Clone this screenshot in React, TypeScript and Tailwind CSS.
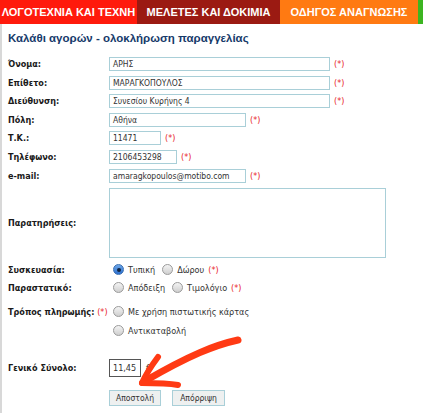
import React from 'react';

const font = { fontFamily: '"DejaVu Sans Condensed", "DejaVu Sans", Verdana, sans-serif' };

function Req() {
  return <span className="text-[#e8242a] text-[9px] ml-[4px]">(*)</span>;
}

function TextField({ value, w }: { value: string; w: string }) {
  return (
    <div
      className={`${w} h-[14px] border border-[#a9cfd8] bg-white text-[8.5px] leading-[12px] px-[3px] text-[#333] whitespace-nowrap overflow-hidden`}
    >
      {value}
    </div>
  );
}

function Radio({ checked }: { checked?: boolean }) {
  if (checked) {
    return (
      <span className="w-[11px] h-[11px] rounded-full bg-gradient-to-b from-[#6fa8e8] to-[#2a6fd0] border border-[#3b6fb0] flex items-center justify-center shrink-0">
        <span className="w-[4px] h-[4px] rounded-full bg-[#10243f]" />
      </span>
    );
  }
  return (
    <span className="block w-[11px] h-[11px] rounded-full bg-gradient-to-b from-[#f4f4f4] to-[#cfcfcf] border border-[#9a9a9a] shrink-0" />
  );
}

function Row({ label, children }: { label: React.ReactNode; children: React.ReactNode }) {
  return (
    <div className="flex items-center leading-[14px]">
      <div className="w-[101px] shrink-0 text-[9px] font-bold text-[#1a1a1a] whitespace-nowrap">{label}</div>
      <div className="flex items-center">{children}</div>
    </div>
  );
}

export default function App() {
  return (
    <div className="relative w-[423px] h-[413px] bg-white overflow-hidden" style={font}>
      <div
        className="flex h-[24px] text-white font-bold text-[11px] whitespace-nowrap"
        style={{ fontFamily: '"Liberation Sans", Arial, sans-serif' }}
      >
        <div className="w-[137px] bg-[#ff1a0c] flex items-center justify-center">ΛΟΓΟΤΕΧΝΙΑ ΚΑΙ ΤΕΧΝΗ</div>
        <div className="w-[143px] bg-[#9b1a12] flex items-center justify-center">ΜΕΛΕΤΕΣ ΚΑΙ ΔΟΚΙΜΙΑ</div>
        <div className="w-[138px] bg-[#ff7a12] flex items-center justify-center">ΟΔΗΓΟΣ ΑΝΑΓΝΩΣΗΣ</div>
        <div className="flex-1 bg-[#3cb521]" />
      </div>

      <div className="border-l-2 border-[#d8d8d8] h-[389px] pl-[6px]">
        <h1
          className="pt-[6px] text-[11.5px] font-bold text-[#163a6a] leading-[16px]"
          style={{ fontFamily: '"Liberation Sans", Arial, sans-serif' }}
        >
          Καλάθι αγορών - ολοκλήρωση παραγγελίας
        </h1>

        <div className="mt-[11px] flex flex-col gap-[4.6px]">
          <Row label="Όνομα:">
            <TextField value="ΑΡΗΣ" w="w-[221px]" />
            <Req />
          </Row>
          <Row label="Επίθετο:">
            <TextField value="ΜΑΡΑΓΚΟΠΟΥΛΟΣ" w="w-[221px]" />
            <Req />
          </Row>
          <Row label="Διεύθυνση:">
            <TextField value="Συνεσίου Κυρήνης 4" w="w-[221px]" />
            <Req />
          </Row>
          <Row label="Πόλη:">
            <TextField value="Αθήνα" w="w-[137px]" />
            <Req />
          </Row>
          <Row label="Τ.Κ.:">
            <TextField value="11471" w="w-[52px]" />
            <Req />
          </Row>
          <Row label="Τηλέφωνο:">
            <TextField value="2106453298" w="w-[68px]" />
            <Req />
          </Row>
          <Row label="e-mail:">
            <TextField value="amaragkopoulos@motibo.com" w="w-[137px]" />
            <Req />
          </Row>
        </div>

        <div className="mt-[5px]">
          <Row label="Παρατηρήσεις:">
            <div className="w-[277px] h-[70px] border border-[#a9cfd8] bg-white" />
          </Row>
        </div>

        <div className="mt-[3px] flex flex-col text-[9px] text-[#333] leading-[14px]">
          <div className="h-[18px] flex items-center">
            <div className="w-[101px] shrink-0 font-bold text-[#1a1a1a]">Συσκευασία:</div>
            <div className="flex items-center pl-[4px]">
              <Radio checked />
              <span className="ml-[4px]">Τυπική</span>
              <span className="ml-[7px]"><Radio /></span>
              <span className="ml-[4px]">Δώρου</span>
              <Req />
            </div>
          </div>
          <div className="h-[18px] flex items-center">
            <div className="w-[101px] shrink-0 font-bold text-[#1a1a1a]">Παραστατικό:</div>
            <div className="flex items-center pl-[4px]">
              <Radio />
              <span className="ml-[4px]">Απόδειξη</span>
              <span className="ml-[7px]"><Radio /></span>
              <span className="ml-[4px]">Τιμολόγιο</span>
              <Req />
            </div>
          </div>
          <div className="h-[24px] flex items-center pt-[6px]">
            <div className="w-[101px] shrink-0 font-bold text-[#1a1a1a] whitespace-nowrap">
              Τρόπος πληρωμής: <span className="text-[#e8242a] font-normal">(*)</span>
            </div>
            <div className="flex items-center pl-[4px]">
              <Radio />
              <span className="ml-[4px]">Με χρήση πιστωτικής κάρτας</span>
            </div>
          </div>
          <div className="h-[20px] flex items-center">
            <div className="w-[101px] shrink-0" />
            <div className="flex items-center pl-[4px]">
              <Radio />
              <span className="ml-[4px]">Αντικαταβολή</span>
            </div>
          </div>
        </div>

        <div className="mt-[18px]">
          <Row label="Γενικό Σύνολο:">
            <div className="w-[32px] h-[18px] border border-[#555] text-[9px] leading-[16px] px-[3px] text-[#333] whitespace-nowrap">11,45</div>
            <span className="ml-[5px] text-[9px] text-[#333]">€</span>
          </Row>
        </div>

        <div className="mt-[13px] flex gap-[11px] pl-[101px]">
          <button className="w-[52px] h-[16px] bg-[#eef0f0] border border-[#a9cfd8] text-[8.5px] text-[#333] leading-[14px] whitespace-nowrap">
            Αποστολή
          </button>
          <button className="w-[53px] h-[16px] bg-[#eef0f0] border border-[#a9cfd8] text-[8.5px] text-[#333] leading-[14px] whitespace-nowrap">
            Απόρριψη
          </button>
        </div>
      </div>

      <svg className="absolute left-0 top-0 pointer-events-none" width="423" height="413" viewBox="0 0 423 413">
        <path
          d="M238 340 C 215 345, 190 355, 145 381"
          stroke="#ff3a14"
          strokeWidth="7"
          fill="none"
          strokeLinecap="round"
        />
        <path d="M158 357 C 152 365, 146 374, 142 383" stroke="#ff3a14" strokeWidth="6" fill="none" strokeLinecap="round" />
        <path d="M142 383 C 155 383, 167 383, 178 385" stroke="#ff3a14" strokeWidth="6" fill="none" strokeLinecap="round" />
      </svg>
    </div>
  );
}
